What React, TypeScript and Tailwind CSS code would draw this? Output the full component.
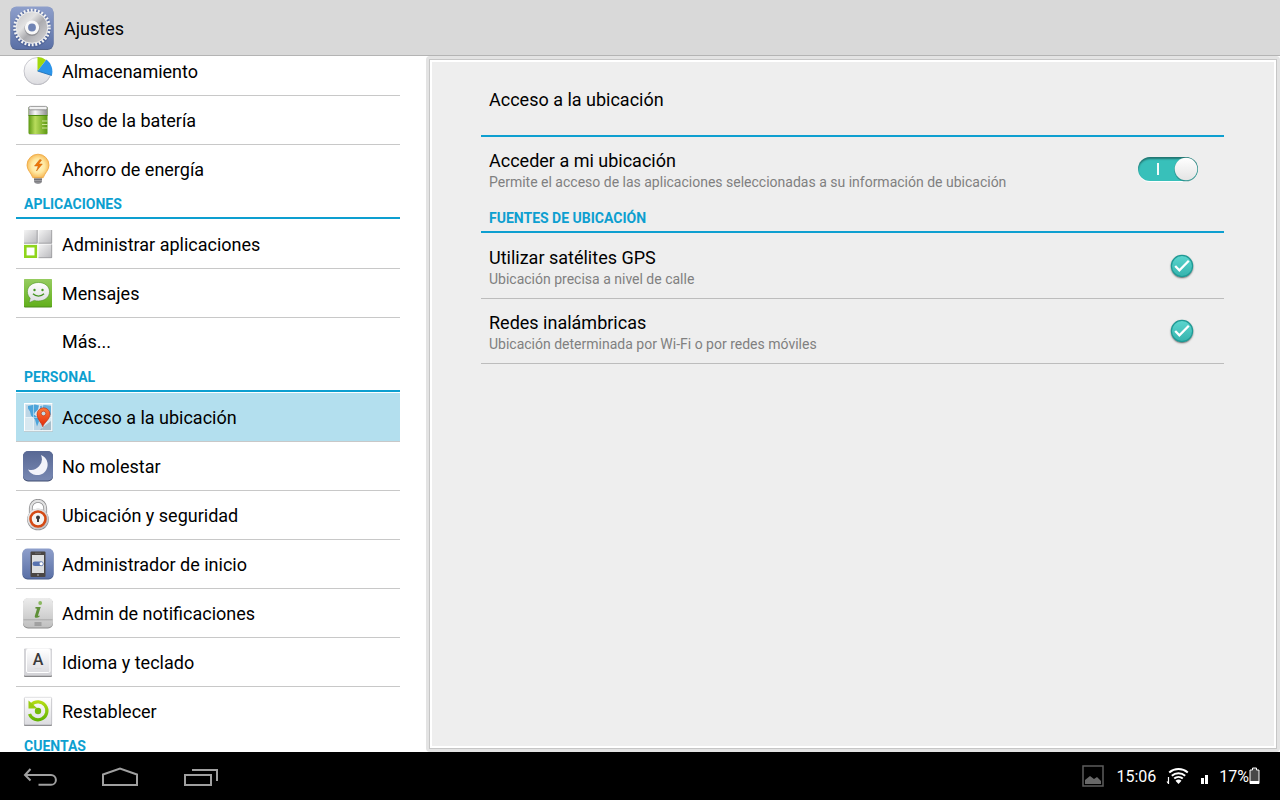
import { useState } from "react";
import type { ReactNode } from "react";

type IconName =
  | "storage" | "battery" | "bulb" | "apps" | "messages" | "map" | "moon"
  | "lock" | "launcher" | "info" | "keyboard" | "reset";

type Entry = { label: string; icon?: IconName; active?: boolean };

const groups: { title?: string; items: Entry[] }[] = [
  {
    items: [
      { label: "Almacenamiento", icon: "storage" },
      { label: "Uso de la batería", icon: "battery" },
      { label: "Ahorro de energía", icon: "bulb" },
    ],
  },
  {
    title: "APLICACIONES",
    items: [
      { label: "Administrar aplicaciones", icon: "apps" },
      { label: "Mensajes", icon: "messages" },
      { label: "Más..." },
    ],
  },
  {
    title: "PERSONAL",
    items: [
      { label: "Acceso a la ubicación", icon: "map", active: true },
      { label: "No molestar", icon: "moon" },
      { label: "Ubicación y seguridad", icon: "lock" },
      { label: "Administrador de inicio", icon: "launcher" },
      { label: "Admin de notificaciones", icon: "info" },
      { label: "Idioma y teclado", icon: "keyboard" },
      { label: "Restablecer", icon: "reset" },
    ],
  },
  { title: "CUENTAS", items: [] },
];

export default function App() {
  return (
    <div className="flex h-screen flex-col overflow-hidden bg-white font-['Roboto',sans-serif] text-black">
      <Defs />
      <header className="flex h-14 shrink-0 items-center gap-[10px] border-b border-[#b4b4b4] bg-[#d9d9d9] pl-[10px]">
        <GearIcon />
        <h1 className="pt-0.5 text-lg">Ajustes</h1>
      </header>
      <div className="flex min-h-0 flex-1">
        <Sidebar />
        <LocationPanel />
      </div>
      <SystemBar />
    </div>
  );
}

const Sidebar = () => {
  return (
    <nav className="w-[426px] shrink-0 overflow-hidden pr-[26px] pl-4">
      {/* list is scrolled a little past its first row */}
      <div className="-mt-[9px]">
        {groups.map((group, i) => (
          <section key={i}>
            {group.title && <SectionTitle>{group.title}</SectionTitle>}
            <ul className="divide-y divide-[#c8c8c8]">
              {group.items.map((item) => (
                <li key={item.label}>
                  <a
                    href="#"
                    className={
                      item.active
                        ? "flex h-12 items-center gap-2 bg-[#b3dfee] pl-[6px] text-lg"
                        : "flex h-12 items-center gap-2 pl-[6px] text-lg"
                    }
                  >
                    <svg viewBox="0 0 32 32" className="size-8 shrink-0" aria-hidden="true">
                      {item.icon && icons[item.icon]}
                    </svg>
                    <span className={item.icon ? "pt-0.5" : ""}>{item.label}</span>
                  </a>
                </li>
              ))}
            </ul>
          </section>
        ))}
      </div>
    </nav>
  );
};

const SectionTitle = ({ children }: { children: ReactNode }) => (
  <h2 className="mb-px h-[26px] border-b-2 border-[#0d9fd0] pl-2 text-sm leading-[22px] font-bold text-[#0d9fd0]">
    {children}
  </h2>
);

const LocationPanel = () => {
  const [access, setAccess] = useState(true);
  const [gps, setGps] = useState(true);
  const [networks, setNetworks] = useState(true);

  return (
    <main className="flex min-w-0 flex-1 rounded-sm bg-[#e3e3e3] p-[3px]">
      <div className="flex flex-1 border border-[#c6c6c6]">
        <div className="flex-1 border-2 border-white bg-[#eeeeee] pr-[50px] pl-[49px]">
          <h2 className="flex h-[75px] items-center border-b-2 border-[#0d9fd0] pt-0.5 pl-2 text-lg">
            Acceso a la ubicación
          </h2>
          <div className="mb-[6px] flex h-16 items-center justify-between pr-[26px] pl-2">
            <RowText
              id="access"
              title="Acceder a mi ubicación"
              summary="Permite el acceso de las aplicaciones seleccionadas a su información de ubicación"
            />
            <Toggle id="access" checked={access} onChange={setAccess} />
          </div>
          <SectionTitle>FUENTES DE UBICACIÓN</SectionTitle>
          <div className="flex h-[65px] items-center justify-between border-b border-[#bcbcbc] pr-[30px] pl-2">
            <RowText id="gps" title="Utilizar satélites GPS" summary="Ubicación precisa a nivel de calle" />
            <Check id="gps" checked={gps} onChange={setGps} />
          </div>
          <div className="flex h-[65px] items-center justify-between border-b border-[#bcbcbc] pr-[30px] pl-2">
            <RowText
              id="networks"
              title="Redes inalámbricas"
              summary="Ubicación determinada por Wi-Fi o por redes móviles"
            />
            <Check id="networks" checked={networks} onChange={setNetworks} />
          </div>
        </div>
      </div>
    </main>
  );
};

const RowText = ({ id, title, summary }: { id: string; title: string; summary: string }) => (
  <label htmlFor={id} className="flex flex-col pt-1">
    <span className="text-lg leading-[22px]">{title}</span>
    <span className="text-sm leading-5 text-[#808080]">{summary}</span>
  </label>
);

type ControlProps = { id: string; checked: boolean; onChange: (value: boolean) => void };

const Toggle = ({ id, checked, onChange }: ControlProps) => (
  <span className="grid">
    <input
      id={id}
      type="checkbox"
      role="switch"
      checked={checked}
      onChange={(e) => onChange(e.target.checked)}
      className="col-start-1 row-start-1 h-6 w-[60px] appearance-none rounded-full bg-[#b5b5b5] shadow-[inset_0_2px_2px_#00000066,0_1px_0_#ffffff] checked:bg-[#38c0ba]"
    />
    <svg viewBox="0 0 60 24" className="pointer-events-none col-start-1 row-start-1 h-6 w-[60px] overflow-visible" aria-hidden="true">
      {checked && <path d="M20 6v12" stroke="#f2fbfa" strokeWidth="2" />}
      <circle cx={checked ? 48 : 12} cy="12.8" r="11.8" fill="#1b6b67" opacity=".5" />
      <circle cx={checked ? 48 : 12} cy="12" r="11.3" fill="url(#knob)" />
    </svg>
  </span>
);

const Check = ({ id, checked, onChange }: ControlProps) => (
  <span className="grid place-items-center px-px">
    <input
      id={id}
      type="checkbox"
      checked={checked}
      onChange={(e) => onChange(e.target.checked)}
      className="col-start-1 row-start-1 size-[22px] appearance-none rounded-full bg-[#d5d5d5] shadow-[0_1px_2px_#00000099]"
    />
    {checked && (
      <svg viewBox="0 0 22 22" className="pointer-events-none col-start-1 row-start-1 size-[22px] overflow-visible" aria-hidden="true">
        <circle cx="11" cy="11" r="10.6" fill="url(#teal)" stroke="#1f9a95" strokeWidth="1.2" />
        <path d="M4.200 11l4.200 4.300L17.800 5.800" fill="none" stroke="#fff" strokeWidth="2.3" />
      </svg>
    )}
  </span>
);

const SystemBar = () => {
  return (
    <footer className="flex h-12 shrink-0 items-center justify-between bg-black px-5 text-white">
      <div className="flex gap-10">
        <button type="button" aria-label="Atrás">
          <svg viewBox="0 0 40 24" className="h-6 w-10" fill="none" stroke="#a0a0a0" strokeWidth="2">
            <path d="M10.500 5L5 11 10.500 16.500M5 11H31a4.900 4.900 0 0 1 0 9.800H18.500" />
          </svg>
        </button>
        <button type="button" aria-label="Inicio">
          <svg viewBox="0 0 40 24" className="h-6 w-10" fill="none" stroke="#a0a0a0" strokeWidth="2">
            <path d="M3 10.500L20 4.500 37 10.500V21H3z" />
          </svg>
        </button>
        <button type="button" aria-label="Recientes">
          <svg viewBox="0 0 40 24" className="h-6 w-10" fill="none" stroke="#a0a0a0" strokeWidth="2">
            <path d="M5 11h26v10H5zM12 6h25v11" />
          </svg>
        </button>
      </div>
      <div className="flex items-center text-base">
        <svg viewBox="0 0 22 22" className="mr-3 size-[22px]" aria-label="Captura">
          <path d="M1 1h20v20H1z" fill="none" stroke="#5c5c5c" strokeWidth="1.500" />
          <path d="M3 19v-4l5-4 4 3 3-2 4 4v3z" fill="#686868" />
        </svg>
        <time className="pt-0.5">15:06</time>
        <svg viewBox="0 0 24 18" className="ml-[10px] h-[18px] w-6" fill="none" stroke="#fff" strokeWidth="2" aria-label="Wi-Fi">
          <path d="M3.200 5.500a14.500 14.500 0 0 1 18.600 0M5.800 8.700a10.500 10.500 0 0 1 13.400 0M8.200 11.600a6.600 6.600 0 0 1 8.600 0" />
          <path d="M12.500 17l-3-3.200a4.500 4.500 0 0 1 6 0z" fill="#fff" stroke="none" />
          <path d="M2.500 10v7M1 14.500l1.500 2" strokeWidth="1.200" />
        </svg>
        <svg viewBox="0 0 8 18" className="mr-px ml-[11px] h-[18px] w-2" fill="#fff" aria-label="Señal">
          <path d="M0 11h3v6H0zM4 8h3v9H4z" />
        </svg>
        <span className="ml-[9px] pt-0.5">17%</span>
        <svg viewBox="0 0 11 18" className="h-[18px] w-[11px]" aria-label="Batería">
          <path d="M1 3h2.500V1h4v2H10v13.500H1z" fill="#484848" stroke="#fff" />
          <path d="M1 14h9v2.500H1z" fill="#fff" />
        </svg>
      </div>
    </footer>
  );
};

// gradients shared by all the icons
const Defs = () => (
  <svg className="absolute size-0" aria-hidden="true">
    <defs>
      <linearGradient id="blue" x2="0" y2="1">
        <stop stopColor="#8e9fcb" />
        <stop offset="1" stopColor="#5a70a6" />
      </linearGradient>
      <linearGradient id="navy" x2="0" y2="1">
        <stop stopColor="#586894" />
        <stop offset="1" stopColor="#7888b2" />
      </linearGradient>
      <linearGradient id="silver" x2="1" y2="1">
        <stop stopColor="#f4f4f4" />
        <stop offset="1" stopColor="#b8b8bc" />
      </linearGradient>
      <linearGradient id="plate" x2="0" y2="1">
        <stop stopColor="#ececec" />
        <stop offset="1" stopColor="#c0c0c0" />
      </linearGradient>
      <linearGradient id="metal" x2="1" y2="1">
        <stop stopColor="#c4c4c6" />
        <stop offset=".35" stopColor="#e2e2e2" />
        <stop offset=".55" stopColor="#acacb0" />
        <stop offset="1" stopColor="#d8d8da" />
      </linearGradient>
      <linearGradient id="paper" x2="0" y2="1">
        <stop stopColor="#ffffff" />
        <stop offset="1" stopColor="#dcdce0" />
      </linearGradient>
      <linearGradient id="knob" x2="0" y2="1">
        <stop stopColor="#ffffff" />
        <stop offset="1" stopColor="#e4e4e4" />
      </linearGradient>
      <linearGradient id="teal" x2="0" y2="1">
        <stop stopColor="#5cd6cf" />
        <stop offset="1" stopColor="#35b3ad" />
      </linearGradient>
      <linearGradient id="green" x2="0" y2="1">
        <stop stopColor="#96cc60" />
        <stop offset="1" stopColor="#62b01c" />
      </linearGradient>
      <linearGradient id="cell" x2="1" y2="0">
        <stop stopColor="#5c9812" />
        <stop offset=".35" stopColor="#b8dc5c" />
        <stop offset="1" stopColor="#5c9812" />
      </linearGradient>
      <linearGradient id="cap" x2="1" y2="0">
        <stop stopColor="#a0a0a0" />
        <stop offset=".35" stopColor="#f8f8f8" />
        <stop offset="1" stopColor="#8c8c8c" />
      </linearGradient>
      <linearGradient id="lime" x2="0" y2="1">
        <stop stopColor="#b2dc14" />
        <stop offset="1" stopColor="#64b404" />
      </linearGradient>
      <linearGradient id="pin" x2="0" y2="1">
        <stop stopColor="#ff7a38" />
        <stop offset="1" stopColor="#e02808" />
      </linearGradient>
      <radialGradient id="glow">
        <stop stopColor="#fff8d0" />
        <stop offset=".6" stopColor="#ffe8a0" />
        <stop offset="1" stopColor="#f8bc5c" />
      </radialGradient>
    </defs>
  </svg>
);

const GearIcon = () => (
  <svg viewBox="0 0 44 44" className="size-11" aria-hidden="true">
    <rect x=".5" y="1" width="43" height="43" rx="6" fill="#55648a" />
    <rect x=".5" y=".5" width="43" height="42.500" rx="6" fill="url(#blue)" />
    <circle cx="22" cy="22.500" r="17.300" fill="none" stroke="#43568a" strokeWidth="3.500" opacity=".45" />
    <circle cx="22" cy="21.500" r="17.300" fill="none" stroke="#f4f4f4" strokeWidth="3" strokeDasharray="1.900 1.724" />
    <circle cx="22" cy="21.500" r="15.800" fill="url(#metal)" stroke="#eeeeee" strokeWidth="1" />
    <circle cx="22" cy="22.500" r="5.800" fill="none" stroke="#7c7c80" strokeWidth="3.500" opacity=".6" />
    <circle cx="22" cy="21.500" r="5.500" fill="#7084b4" stroke="#f8f8f8" strokeWidth="3.200" />
  </svg>
);

const icons: Record<IconName, ReactNode> = {
  storage: (
    <>
      <circle cx="15.500" cy="16.500" r="13.500" fill="#a4a4a8" />
      <circle cx="15.500" cy="16" r="13.500" fill="url(#paper)" stroke="#c0c0c8" strokeWidth=".8" />
      <path d="M15.500 16V2A14 14 0 0 1 24 5z" fill="#a2d80c" />
      <path d="M15.500 16L24.500 4.500A15 15 0 0 1 29.800 20.500z" fill="#2c94e8" />
      <path d="M15.500 16l14.300 4.500" stroke="#1668b0" strokeWidth=".8" />
    </>
  ),
  battery: (
    <>
      <rect x="7" y="28" width="18.500" height="3" rx="1" fill="#000" opacity=".2" />
      <rect x="6.500" y="3" width="19" height="27" rx="1" fill="url(#cell)" />
      <rect x="6.500" y="3.500" width="19" height="8" fill="url(#cap)" />
      <path d="M6.500 11.500h19" stroke="#4e8a10" />
      <rect x="6.800" y="2.400" width="18.400" height="3.400" rx="1.500" fill="#f2f2f2" stroke="#848484" strokeWidth=".8" />
      <path d="M20 17h5.500M20 20.500h5.500M20 24h5.500" stroke="#e4f4b4" strokeWidth=".8" />
    </>
  ),
  bulb: (
    <>
      <path d="M12 24h8v4.500c0 1-2 2.500-4 2.500s-4-1.500-4-2.500z" fill="#9c9ca0" />
      <path d="M12 26.500h8M12.500 28.800h7" stroke="#65656a" strokeWidth=".8" />
      <path d="M16 1.200a11 11 0 0 0-11 11c0 5 3.800 7 5.800 12.500h10.400c2-5.500 5.800-7.500 5.800-12.500a11 11 0 0 0-11-11z" fill="url(#glow)" stroke="#eda63c" strokeWidth=".8" />
      <path d="M17.800 6.500L12.500 13h3.700L14.500 18l5.800-7h-3.600l2.800-4z" fill="#f07808" stroke="#c85c04" strokeWidth=".5" />
    </>
  ),
  apps: (
    <>
      <g fill="url(#silver)">
        <rect x="2" y="2" width="13.500" height="13.500" />
        <rect x="16.500" y="2" width="13.500" height="13.500" />
        <rect x="16.500" y="16.500" width="13.500" height="13.500" />
      </g>
      <path d="M2 15.200h13.200V2M16.500 15.200h13.200V2M16.500 29.700h13.200V16.500" fill="none" stroke="#98989c" strokeWidth=".8" />
      <rect x="3.300" y="18.200" width="10.500" height="10.500" fill="#fff" stroke="#8fd51c" strokeWidth="2.600" />
    </>
  ),
  messages: (
    <>
      <rect x="2" y="2.500" width="28" height="28" rx="1" fill="#4c8c1c" />
      <rect x="2" y="2" width="28" height="27.500" rx="1" fill="url(#green)" />
      <path d="M16.500 5.500c6.500 0 11 4 11 9.200s-4.500 9.300-11 9.300c-1.500 0-3-.2-4.200-.6L7 25.800l1.200-4.600c-1.800-1.700-2.800-4-2.800-6.500 0-5.200 4.600-9.200 11.100-9.200z" fill="url(#paper)" stroke="#4e9422" strokeWidth=".6" />
      <circle cx="12.500" cy="13" r="1.200" fill="#459420" />
      <circle cx="20.500" cy="13" r="1.200" fill="#459420" />
      <path d="M11 16.800c2.800 3 8.200 3 11 0" fill="none" stroke="#459420" strokeWidth="1.300" />
    </>
  ),
  map: (
    <>
      <rect x="2" y="2.500" width="28.500" height="28.500" fill="#000" opacity=".3" />
      <rect x="2.500" y="2.500" width="27.500" height="27.500" fill="#d8e8f0" stroke="#fff" />
      <path d="M4 4h8v12H4zM20 4h9v12h-9zM12 17h8v12h-8z" fill="#bcd6e6" />
      <path d="M6 5l7-1.500 4 1-1 4-3 3-1 2 4 3 1 4-2 5-2-7-4-4-1-4-2-3z" fill="#4ca4da" />
      <path d="M18 5l5-1 6 1v9l-4-1-5 1-2-4z" fill="#67b2df" />
      <path d="M11.500 3v27M20.500 3v27M3 16.500h27" stroke="#f4fafc" strokeWidth=".7" opacity=".7" />
      <path d="M21 26l8-6v9H18z" fill="#7494a6" opacity=".5" />
      <path d="M20.800 25.800c-1-4-5.800-7.300-5.800-12.500a6.500 6.500 0 0 1 13 0c0 5.200-6.200 8.500-7.200 12.500z" fill="url(#pin)" stroke="#b8260c" strokeWidth=".6" />
      <circle cx="21.500" cy="12.500" r="2.300" fill="#c4dce4" stroke="#bc3010" strokeWidth=".6" />
    </>
  ),
  moon: (
    <>
      <rect x="1" y="1.500" width="30" height="30" rx="5" fill="#3f4c70" />
      <rect x="1" y="1" width="30" height="29.500" rx="5" fill="url(#navy)" />
      <path d="M19 5a10.400 10.400 0 1 1-13 14.500A10.800 10.800 0 0 0 19 5z" fill="#f2f3fa" />
    </>
  ),
  lock: (
    <>
      <path d="M8.800 14V9a7.200 7.200 0 0 1 14.400 0v5" fill="none" stroke="#8e8e90" strokeWidth="3.800" />
      <path d="M8.800 14V9a7.200 7.200 0 0 1 14.400 0v5" fill="none" stroke="#e2e2e2" strokeWidth="2.200" />
      <circle cx="16" cy="20.500" r="10.800" fill="#8c8c8e" />
      <circle cx="16" cy="20" r="10.500" fill="url(#silver)" />
      <circle cx="16" cy="20" r="7.500" fill="#f4f4f2" stroke="#d44a14" strokeWidth="2.600" />
      <circle cx="16" cy="18.500" r="2" fill="#38383a" />
      <path d="M15 18.500h2v4.500h-2z" fill="#38383a" />
    </>
  ),
  launcher: (
    <>
      <rect x=".5" y="1" width="31" height="30.500" rx="5" fill="#475a88" />
      <rect x=".5" y=".500" width="31" height="30" rx="5" fill="url(#blue)" />
      <rect x="8.500" y="3.500" width="15" height="25.500" rx="1" fill="#4a4644" />
      <rect x="10" y="7" width="12" height="18" fill="#dcdee0" />
      <path d="M13 5.200h6" stroke="#77777a" strokeWidth=".8" />
      <path d="M15 27h2" stroke="#b8b8ba" />
      <rect x="10.500" y="13.500" width="11" height="4.600" rx="2.300" fill="#5873b0" />
      <circle cx="19.200" cy="15.800" r="2" fill="#fff" stroke="#4e68a4" strokeWidth=".6" />
    </>
  ),
  info: (
    <>
      <rect x="1" y="1.500" width="30" height="30" rx="5" fill="#8c8c8c" />
      <rect x="1" y="1" width="30" height="29.500" rx="5" fill="url(#plate)" />
      <path d="M1.500 22.800h29" stroke="#a2a2a2" strokeWidth=".8" />
      <path d="M12.500 26h7M12.500 28h7" stroke="#747474" strokeWidth=".9" />
      <circle cx="18.200" cy="6" r="1.900" fill="#8ab860" />
      <path d="M13.500 10h5.200l-2.600 8.300c-.2.800.3.900 1.400.2v1.300c-2.200 1.600-5.300 1.400-4.700-.9l2-6.400c.2-.8-.3-1.100-1.500-1z" fill="#5f9038" />
    </>
  ),
  keyboard: (
    <>
      <rect x="2" y="3" width="28" height="28" rx="1" fill="#88888a" />
      <rect x="2" y="2.500" width="28" height="27.300" rx="1" fill="#d4d4d8" />
      <rect x="4.500" y="3" width="23.500" height="23.500" rx="1.500" fill="url(#paper)" stroke="#fff" />
      <text x="16" y="19" textAnchor="middle" className="fill-[#3a3a3a] text-[16px] font-medium">A</text>
      <path d="M12.500 22.500h7" stroke="#dcdcdc" />
    </>
  ),
  reset: (
    <>
      <rect x="2" y="3" width="28" height="28" rx="1" fill="#8a8a8c" />
      <rect x="2.300" y="2.300" width="27.400" height="27.400" rx="1" fill="url(#paper)" stroke="#c8c8cc" strokeWidth=".6" />
      <path d="M9.500 9.500A9 9 0 1 1 7.500 19" fill="none" stroke="url(#lime)" strokeWidth="3.200" />
      <path d="M6.500 5.500v8h9z" fill="#98cc10" />
      <circle cx="16" cy="16" r="3.200" fill="#74bc08" />
    </>
  ),
};
